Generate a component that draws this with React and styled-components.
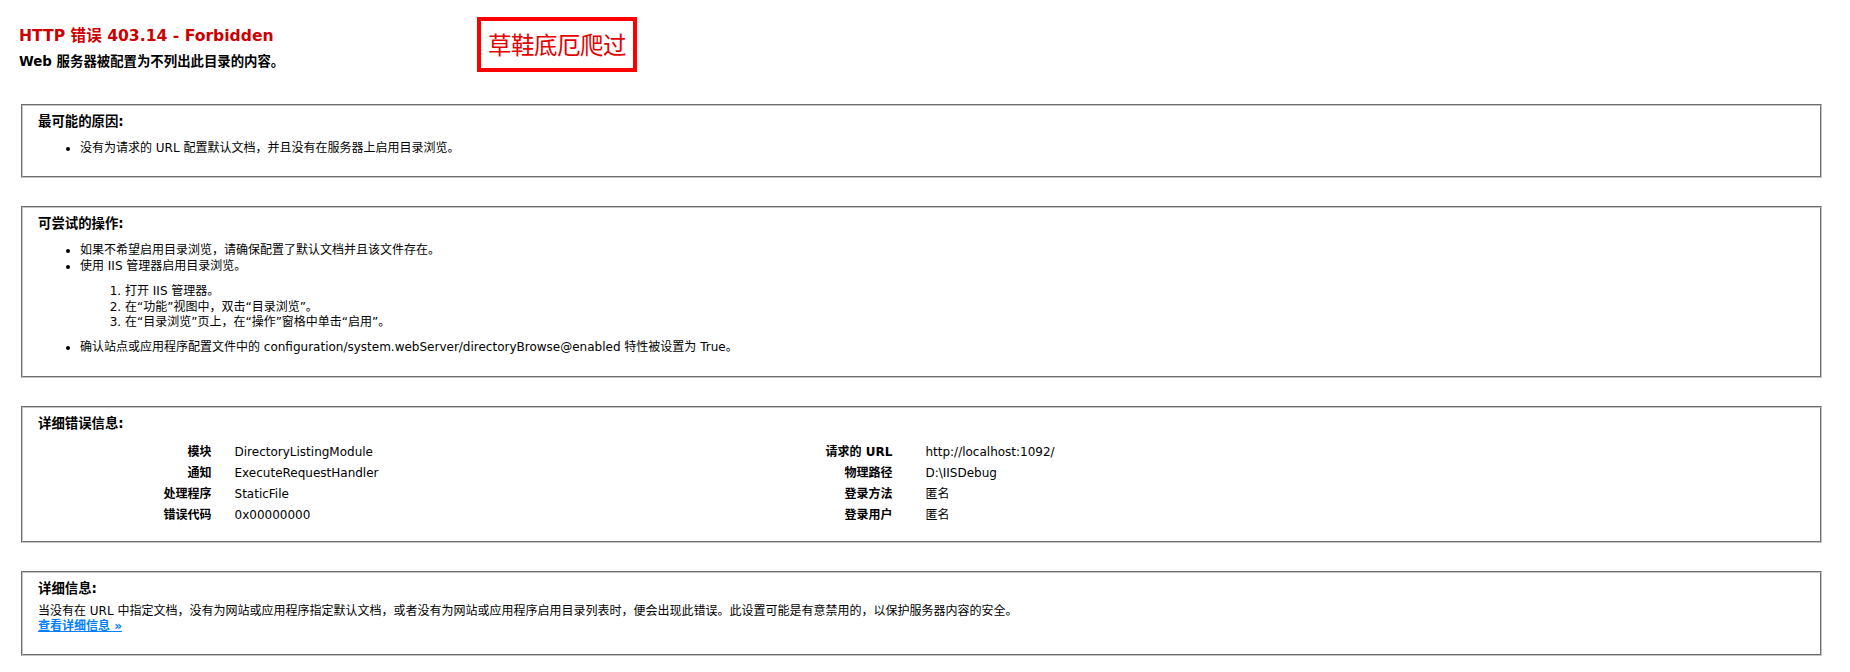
import React from 'react';
import styled, { createGlobalStyle } from 'styled-components';

const GlobalStyle = createGlobalStyle`
  body {
    margin: 0;
    background: #fff;
    color: #000;
    font-family: "DejaVu Sans", "Noto Sans CJK SC", sans-serif;
    font-size: 12px;
    line-height: 15px;
  }
`;

const Page = styled.div`
  position: relative;
  padding: 6px 16px 0 9px;
`;

const Container = styled.div`
  padding: 10px;

  & + & {
    margin-top: 8px;
  }
`;

const Title = styled.h3`
  margin: 11px 0 0 0;
  font-size: 15.6px;
  line-height: 18px;
  font-weight: bold;
  color: #cc0000;
`;

const Subtitle = styled.h4`
  margin: 9px 0 6px 0;
  font-size: 13.4px;
  line-height: 16px;
  font-weight: bold;
`;

/* the red stamp that was drawn over the screenshot */
const Stamp = styled.div`
  position: absolute;
  left: 477px;
  top: 17px;
  width: 152px;
  height: 47px;
  border: 4px solid #ff0000;
  display: flex;
  align-items: center;
  justify-content: center;
  color: #e60000;
  font-family: "Noto Sans CJK SC", sans-serif;
  font-size: 23.5px;
  letter-spacing: -0.5px;
`;

const Box = styled.fieldset`
  margin: 0 2px;
  padding: 0 15px 10px 15px;
  border: 2px groove #c4c4c4;
  min-width: 0;
`;

const Heading = styled.h4`
  margin: 8px 0 5px 0;
  font-size: 13.4px;
  line-height: 16px;
  font-weight: bold;
`;

const List = styled.ul`
  margin: 11px 0 10px 5px;
  padding-left: 37px;

  li {
    line-height: 15.4px;
  }
`;

const Steps = styled.ol`
  margin: 10px 0 10px 5px;
  padding-left: 40px;
`;

const Details = styled.div`
  display: flex;
  gap: 2%;
  margin: 10px 0 5px 0;
`;

const DetailColumn = styled.div`
  width: ${(props) => props.$width};
  display: grid;
  grid-template-columns: ${(props) => props.$th} 1fr;
`;

const Th = styled.div`
  padding: 3px 0 3px 0;
  padding-right: ${(props) => props.$pad};
  text-align: right;
  font-weight: bold;
`;

const Td = styled.div`
  padding: 3px 0 3px 11px;
`;

const Text = styled.div`
  margin-top: 7px;
  line-height: 15px;
`;

const Para = styled.p`
  margin: 0 0 10px 0;
`;

const Link = styled.a`
  color: #007eff;
  font-weight: bold;
  text-decoration: underline;
`;

const leftRows = [
  ['模块', 'DirectoryListingModule'],
  ['通知', 'ExecuteRequestHandler'],
  ['处理程序', 'StaticFile'],
  ['错误代码', '0x00000000'],
];

const rightRows = [
  ['请求的 URL', 'http://localhost:1092/'],
  ['物理路径', 'D:\\IISDebug'],
  ['登录方法', '匿名'],
  ['登录用户', '匿名'],
];

const App = () => {
  return (
    <Page>
      <GlobalStyle />
      <Stamp>草鞋底厄爬过</Stamp>

      <Container>
        <Title>HTTP 错误 403.14 - Forbidden</Title>
        <Subtitle>Web 服务器被配置为不列出此目录的内容。</Subtitle>
      </Container>

      <Container>
        <Box>
          <Heading>最可能的原因:</Heading>
          <List>
            <li>没有为请求的 URL 配置默认文档，并且没有在服务器上启用目录浏览。</li>
          </List>
        </Box>
      </Container>

      <Container>
        <Box>
          <Heading>可尝试的操作:</Heading>
          <List>
            <li>如果不希望启用目录浏览，请确保配置了默认文档并且该文件存在。</li>
            <li>
              使用 IIS 管理器启用目录浏览。
              <Steps>
                <li>打开 IIS 管理器。</li>
                <li>在“功能”视图中，双击“目录浏览”。</li>
                <li>在“目录浏览”页上，在“操作”窗格中单击“启用”。</li>
              </Steps>
            </li>
            <li>确认站点或应用程序配置文件中的 configuration/system.webServer/directoryBrowse@enabled 特性被设置为 True。</li>
          </List>
        </Box>
      </Container>

      <Container>
        <Box>
          <Heading>详细错误信息:</Heading>
          <Details>
            <DetailColumn $width="35%" $th="30%">
              {leftRows.map(([label, value]) => (
                <React.Fragment key={label}>
                  <Th $pad="12px">{label}</Th>
                  <Td>{value}</Td>
                </React.Fragment>
              ))}
            </DetailColumn>
            <DetailColumn $width="63%" $th="20%">
              {rightRows.map(([label, value]) => (
                <React.Fragment key={label}>
                  <Th $pad="22px">{label}</Th>
                  <Td>{value}</Td>
                </React.Fragment>
              ))}
            </DetailColumn>
          </Details>
        </Box>
      </Container>

      <Container>
        <Box>
          <Heading>详细信息:</Heading>
          <Text>
            当没有在 URL 中指定文档，没有为网站或应用程序指定默认文档，或者没有为网站或应用程序启用目录列表时，便会出现此错误。此设置可能是有意禁用的，以保护服务器内容的安全。
          </Text>
          <Para>
            <Link href="#">查看详细信息 »</Link>
          </Para>
        </Box>
      </Container>
    </Page>
  );
};

export default App;
